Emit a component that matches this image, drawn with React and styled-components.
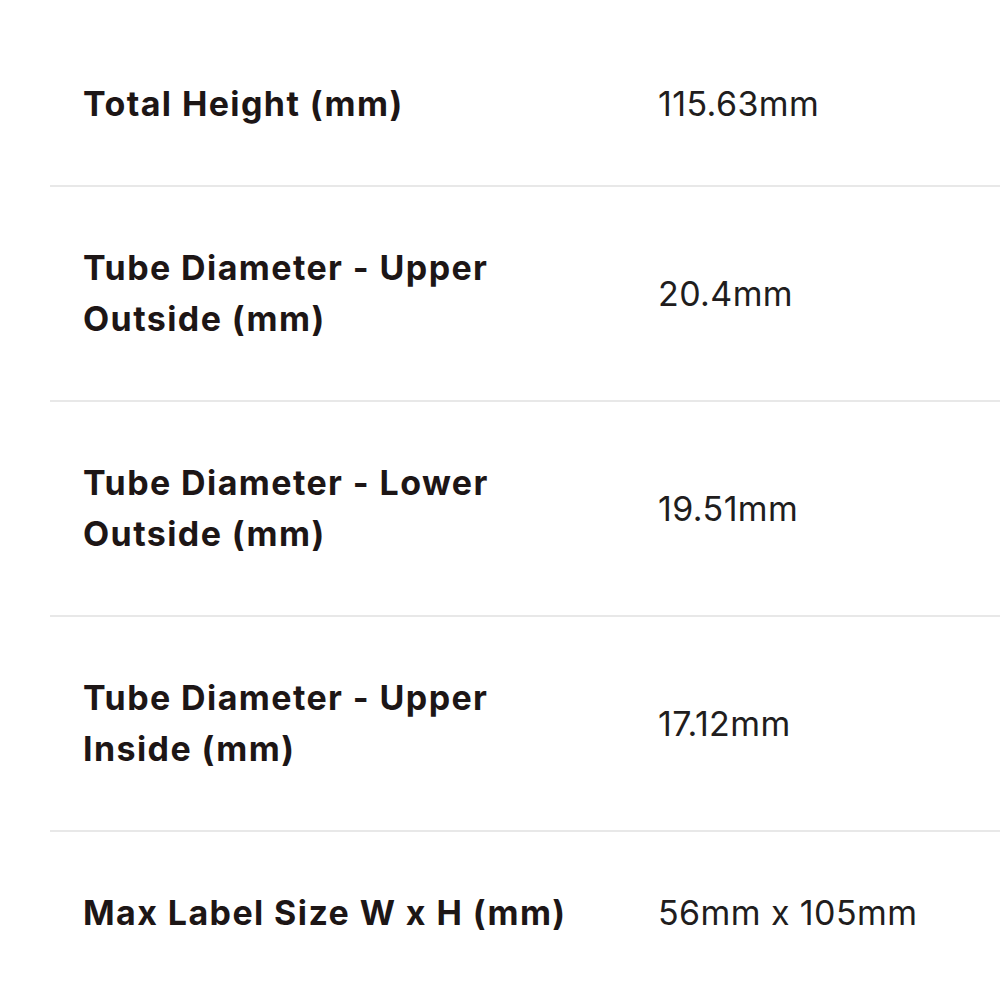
import React from 'react';
import styled, { createGlobalStyle } from 'styled-components';

const GlobalStyle = createGlobalStyle`
  html, body {
    margin: 0;
    padding: 0;
    background: #ffffff;
  }
  body {
    font-family: Inter, "Noto Sans", "Liberation Sans", sans-serif;
    -webkit-font-smoothing: antialiased;
  }
`;

const SpecTable = styled.div`
  padding: 23px 0 0 50px;
  display: flex;
  flex-direction: column;
`;

const SpecRow = styled.div`
  display: grid;
  grid-template-columns: 520px 1fr;
  column-gap: 55px;
  align-items: center;
  padding: 55px 33px 56px;
  border-bottom: ${props => (props.last ? 'none' : '2px solid #e8e8e8')};
`;

const SpecLabel = styled.div`
  font-size: 34px;
  font-weight: 700;
  line-height: 51px;
  letter-spacing: 1.4px;
  color: #1d1616;
`;

const SpecValue = styled.div`
  font-size: 34px;
  font-weight: 400;
  line-height: 51px;
  letter-spacing: 0.4px;
  color: #211d1d;
`;

const specs = [
  { label: 'Total Height (mm)', value: '115.63mm' },
  { label: 'Tube Diameter - Upper Outside (mm)', value: '20.4mm' },
  { label: 'Tube Diameter - Lower Outside (mm)', value: '19.51mm' },
  { label: 'Tube Diameter - Upper Inside (mm)', value: '17.12mm' },
  { label: 'Max Label Size W x H (mm)', value: '56mm x 105mm' },
];

const App = () => (
  <>
    <GlobalStyle />
    <SpecTable>
      {specs.map((spec, i) => (
        <SpecRow key={spec.label} last={i === specs.length - 1}>
          <SpecLabel>{spec.label}</SpecLabel>
          <SpecValue>{spec.value}</SpecValue>
        </SpecRow>
      ))}
    </SpecTable>
  </>
);

export default App;
